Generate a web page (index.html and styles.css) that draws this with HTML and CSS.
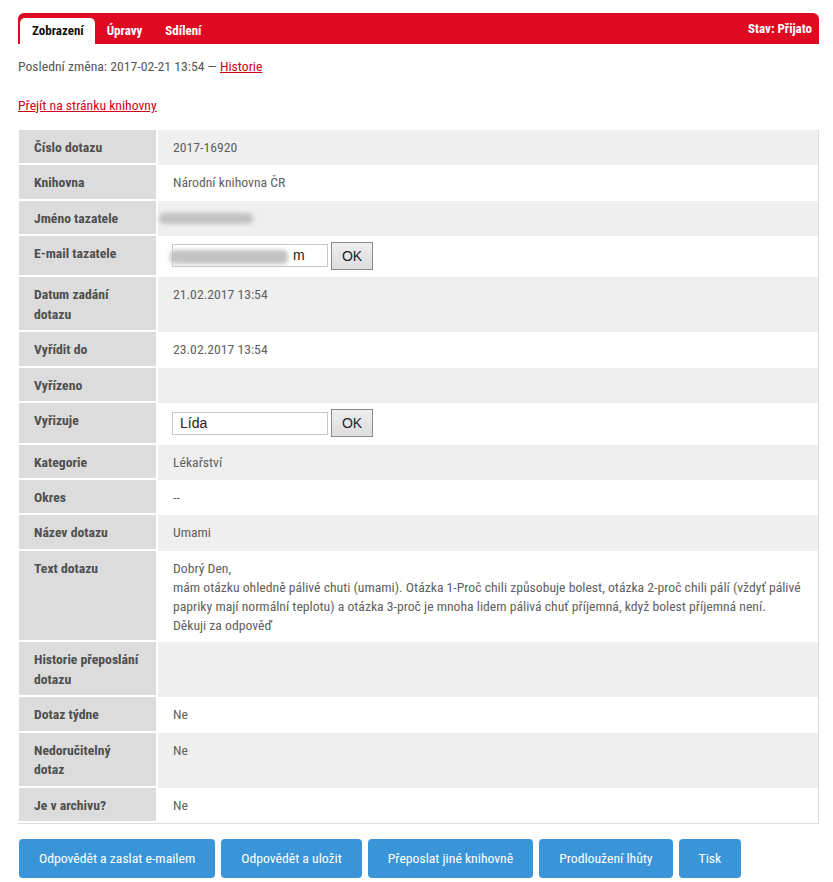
FILE: index.html
```html
<!DOCTYPE html>
<html lang="cs">
<head>
<meta charset="utf-8">
<title>Dotaz 2017-16920</title>
<link rel="stylesheet" href="styles.css">
</head>
<body>
<div class="page">
  <div class="tabbar">
    <div class="tabs">
      <span class="tab active">Zobrazení</span>
      <span class="tab">Úpravy</span>
      <span class="tab">Sdílení</span>
    </div>
    <span class="state">Stav: Přijato</span>
  </div>

  <p class="changed">Poslední změna: 2017-02-21 13:54 — <a href="#" class="link">Historie</a></p>
  <p class="libline"><a href="#" class="link">Přejít na stránku knihovny</a></p>

  <table class="detail">
    <tr class="odd"><th>Číslo dotazu</th><td>2017-16920</td></tr>
    <tr class="even"><th>Knihovna</th><td>Národní knihovna ČR</td></tr>
    <tr class="odd"><th>Jméno tazatele</th><td><span class="blob name"></span></td></tr>
    <tr class="even"><th>E-mail tazatele</th><td><div class="field"><div class="input"><span class="blob mail"></span>m</div><span class="ok">OK</span></div></td></tr>
    <tr class="odd"><th>Datum zadání dotazu</th><td>21.02.2017 13:54</td></tr>
    <tr class="even"><th>Vyřídit do</th><td>23.02.2017 13:54</td></tr>
    <tr class="odd"><th>Vyřízeno</th><td></td></tr>
    <tr class="even"><th>Vyřizuje</th><td><div class="field"><div class="input">Lída</div><span class="ok">OK</span></div></td></tr>
    <tr class="odd"><th>Kategorie</th><td>Lékařství</td></tr>
    <tr class="even"><th>Okres</th><td>--</td></tr>
    <tr class="odd"><th>Název dotazu</th><td>Umami</td></tr>
    <tr class="even"><th>Text dotazu</th><td class="long">Dobrý Den,<br>mám otázku ohledně pálivé chuti (umami). Otázka 1-Proč chili způsobuje bolest, otázka 2-proč chili pálí (vždyť pálivé papriky mají normální teplotu) a otázka 3-proč je mnoha lidem pálivá chuť příjemná, když bolest příjemná není.<br>Děkuji za odpověď</td></tr>
    <tr class="odd"><th>Historie přeposlání dotazu</th><td></td></tr>
    <tr class="even"><th>Dotaz týdne</th><td>Ne</td></tr>
    <tr class="odd"><th>Nedoručitelný dotaz</th><td>Ne</td></tr>
    <tr class="even"><th>Je v archivu?</th><td>Ne</td></tr>
  </table>

  <div class="actions">
    <span class="btn">Odpovědět a zaslat e-mailem</span>
    <span class="btn">Odpovědět a uložit</span>
    <span class="btn">Přeposlat jiné knihovně</span>
    <span class="btn">Prodloužení lhůty</span>
    <span class="btn">Tisk</span>
  </div>
</div>
</body>
</html>
```
FILE: styles.css
```css
html, body {
  margin: 0;
  padding: 0;
  background: #fff;
}
body {
  font-family: "Roboto Condensed", Roboto, "Liberation Sans", sans-serif;
  font-stretch: 75%;
  font-size: 13.7px;
  color: #555;
}
.page {
  padding: 13px 14px 0 18px;
}
.tabbar {
  background: #df0a22;
  height: 31px;
  border-radius: 6px 6px 0 0;
  display: flex;
  justify-content: space-between;
  align-items: flex-end;
  padding: 0 7px 0 2px;
}
.tabs {
  display: flex;
  align-items: flex-end;
}
.tab {
  display: block;
  height: 26px;
  line-height: 26px;
  padding: 0 11px 0 12px;
  color: #fff;
  font-weight: 700;
  font-size: 13px;
}
.tab.active {
  background: #fff;
  color: #111;
  border-radius: 5px 5px 0 0;
}
.state {
  align-self: center;
  color: #fff;
  font-weight: 700;
  font-size: 13px;
}
.changed {
  margin: 12px 0 0;
  line-height: 20px;
}
.libline {
  margin: 19px 0 0;
  line-height: 20px;
}
.link {
  color: #d0001c;
  text-decoration: underline;
}
.detail {
  margin-top: 15px;
  width: 100%;
  border-collapse: separate;
  border-spacing: 0;
  border-right: 1px solid #ddd;
  border-bottom: 1px solid #ddd;
}
.detail th,
.detail td {
  text-align: left;
  vertical-align: top;
  line-height: 19.7px;
  padding: 8px 15px 7.6px;
}
.detail th {
  width: 107px;
  background: #dcdcdc;
  font-weight: 700;
  color: #4f4f4f;
  border-right: 2px solid #fff;
  border-bottom: 2px solid #fff;
  padding: 8px 15px 5.6px 15px;
  border-left: 1px solid #fff;
}
.detail td {
  color: #5f5f5f;
}
.detail td.long {
  line-height: 19.05px;
}
.odd td {
  background: #efefef;
}
.even td {
  background: #fff;
}
.blob {
  display: inline-block;
  vertical-align: middle;
  background: #c2c2c2;
  filter: blur(2px);
  border-radius: 5px;
}
.blob.name {
  width: 94px;
  height: 11px;
  margin-left: -14px;
}
.blob.mail {
  width: 118px;
  height: 14px;
  margin-left: -10px;
  margin-right: 5px;
}
.field {
  display: flex;
  align-items: center;
  gap: 3px;
  margin: -2px 0 0 -1px;
}
.input {
  width: 140px;
  height: 21px;
  border: 1px solid #c8c8c8;
  background: #fff;
  padding: 0 7px;
  font-family: "Liberation Sans", Arial, sans-serif;
  font-size: 14px;
  line-height: 21px;
  color: #222;
  white-space: nowrap;
}
.ok {
  display: block;
  width: 40px;
  height: 26px;
  border: 1px solid #8a8a8a;
  background: linear-gradient(#eeeeee, #dddddd);
  font-family: "Liberation Sans", Arial, sans-serif;
  font-size: 14px;
  line-height: 26px;
  text-align: center;
  color: #222;
}
.actions {
  display: flex;
  gap: 6px;
  margin-top: 15px;
  padding-left: 1px;
}
.btn {
  display: block;
  height: 39px;
  line-height: 39px;
  padding: 0 20px;
  background: #3a95d8;
  color: #fff;
  border-radius: 4px;
  font-size: 13.7px;
}
```
